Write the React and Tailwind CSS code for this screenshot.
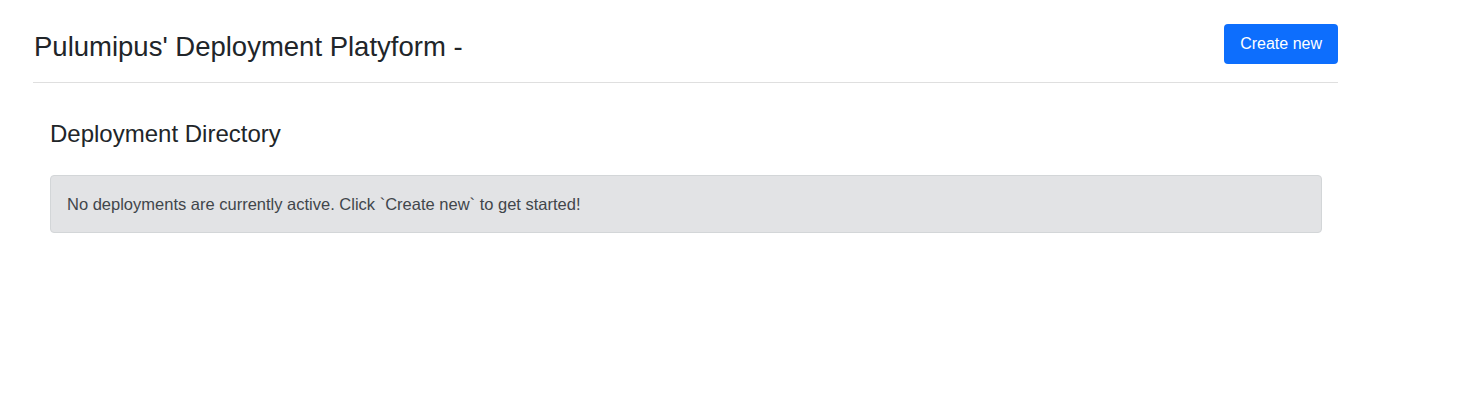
import React from 'react';

export default function App() {
  return (
    <div className="min-h-screen bg-white text-[#212529]" style={{ fontFamily: '"Liberation Sans", Arial, sans-serif' }}>
      <div className="ml-[33px] w-[1305px]">
        {/* Header */}
        <header className="flex items-center justify-between pt-[24px] pb-[18px] border-b border-[#dfdfdf]">
          <h3 className="text-[27.5px] leading-[1.2] font-normal pl-px pt-[5px]">Pulumipus' Deployment Platyform -</h3>
          <button className="h-[40px] px-[16px] rounded-[4px] bg-[#0d6efd] text-white text-[16px] leading-6">
            Create new
          </button>
        </header>

        {/* Directory */}
        <section className="px-[17px] pt-[37px]">
          <h4 className="text-[24px] leading-[1.2] font-normal">Deployment Directory</h4>
          <div className="mt-[26px] w-[1272px] px-[16px] py-[16px] rounded-[4px] border border-[#d3d6d8] bg-[#e2e3e5] text-[#41464b] text-[16.5px] leading-6">
            No deployments are currently active. Click `Create new` to get started!
          </div>
        </section>
      </div>
    </div>
  );
}
